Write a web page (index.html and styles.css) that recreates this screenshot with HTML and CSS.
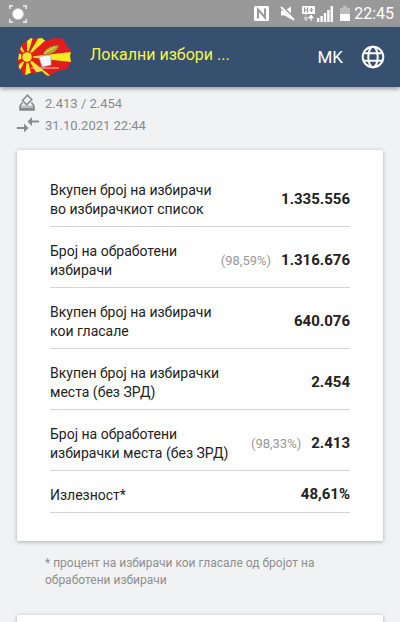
FILE: index.html
```html
<!DOCTYPE html>
<html lang="mk">
<head>
<meta charset="utf-8">
<meta name="viewport" content="width=device-width, initial-scale=1">
<title>Локални избори</title>
<link rel="stylesheet" href="styles.css">
</head>
<body>
<div class="status-bar">
  <svg class="capture" width="18" height="18" viewBox="0 0 18 18" fill="none" stroke="#fff" aria-hidden="true">
    <path d="M.8 4V.8H4M14 .8h3.200V4M17.200 14v3.200H14M4 17.200H.8V14" stroke-width="1.200"/>
    <circle cx="9" cy="9" r="5.500" fill="#fff" stroke="#c8c8c8"/>
  </svg>
  <div class="status-icons">
    <svg width="15" height="15" viewBox="0 0 15 15" aria-hidden="true">
      <rect width="15" height="15" rx="1.500" fill="#fff"/>
      <path d="M4 12.500V3.500l7 8V2.500" fill="none" stroke="#999" stroke-width="2"/>
    </svg>
    <svg class="mute" width="15" height="15" viewBox="0 0 15 15" aria-hidden="true">
      <path d="M1 4.500h4l6-4v13l-6-4H1z" fill="#fff"/>
      <path d="M1 0l14 14" stroke="#999" stroke-width="3.400"/>
      <path d="M1 1l13 13" stroke="#fff" stroke-width="1.800"/>
    </svg>
    <svg class="data" width="13" height="16" viewBox="0 0 13 16" aria-hidden="true">
      <path d="M0 0h13v8H0z" fill="#fff"/>
      <path d="M2.500 1.500v5M5.500 1.500v5M2.500 4h3M7.500 4h4M9.500 2v4" stroke="#999" stroke-width="1.200"/>
      <path d="M4 8v5M1.800 11.500L4 15l2.200-3.500z" fill="#ccc" stroke="#ccc"/>
      <path d="M9 15v-4M6.800 12L9 9l2.200 3z" fill="#fff" stroke="#fff"/>
    </svg>
    <svg width="16" height="16" viewBox="0 0 16 16" fill="#fff" aria-hidden="true">
      <path d="M0 12h2.400v4H0zM3.400 10h2.400v6H3.400zM6.800 7h2.400v9H6.800zM10.200 4h2.400v12h-2.400zM13.600 0H16v16h-2.400z"/>
    </svg>
    <svg class="battery" width="10" height="15" viewBox="0 0 10 15" aria-hidden="true">
      <path d="M3 0h4v2h3v6H0V2h3z" fill="#bdbdbd"/>
      <path d="M0 8h10v7H0z" fill="#fff"/>
    </svg>
    <span class="clock">22:45</span>
  </div>
</div>

<header class="app-bar">
  <svg class="logo" width="54" height="40" viewBox="0 0 54 40" aria-hidden="true">
    <defs>
      <clipPath id="land">
        <path d="M2 13L4 7l5-3 4-3 3 1 8-1 2 2 3 1 4-2 6-1 7 1 1 4 2 3 4 5-1 5 1 6-2 3-2 4-6 1-5 2-4 2-4 2-3-2-3-3-8 2-4 0-4 2-3-1-2-4-2-2-1-7 1-7z"/>
      </clipPath>
    </defs>
    <g clip-path="url(#land)">
      <path d="M0 0h54v40H0z" fill="#e31d1c"/>
      <path fill="#f8ea22" d="M9 20L54 15v10zM9 20L21 0h10zM9 20L21 40h13zM9 20L9 0h6zM9 20L7 40h7zM9 20L0 3v7zM9 20L0 16v7zM9 20L0 29v8z"/>
      <circle cx="9" cy="20" r="6" fill="#e31d1c"/>
      <circle cx="9" cy="20" r="4.800" fill="#f8e72e"/>
    </g>
    <path d="M21 20l8-2 4 1 0 9-9 2z" fill="#f6f6f6" stroke="#aaa" stroke-width=".6"/>
    <path d="M25 18c1-5 5-9 16-10-1 5-6 10-16 10z" fill="#bfa32e" stroke="#766018" stroke-width=".6"/>
    <path d="M26 17c3-3 7-5 11-7" fill="none" stroke="#eee16c"/>
    <path d="M13 31h28" stroke="#f6caca"/>
  </svg>
  <h1 class="title">Локални избори ...</h1>
  <button class="language" type="button">MK</button>
  <button class="globe" type="button" aria-label="Јазик">
    <svg width="24" height="24" viewBox="0 0 24 24" fill="none" stroke="#fff" stroke-width="2" aria-hidden="true">
      <circle cx="12" cy="12" r="10.300"/>
      <ellipse cx="12" cy="12" rx="4.700" ry="10.300"/>
      <path d="M2.500 8.300h19M2.500 15.700h19"/>
    </svg>
  </button>
</header>

<main class="content">
  <section class="updates">
    <p class="update">
      <svg width="22" height="18" viewBox="0 0 22 18" aria-hidden="true">
        <path d="M10.500 1.200l4.300 4.300-5 5.300-4.300-4.300z" fill="none" stroke="#8a8a8a" stroke-width="1.600"/>
        <path d="M5.500 8.500L3 12M14.500 8.500L17 12" fill="none" stroke="#8a8a8a" stroke-width="1.600"/>
        <path d="M2.200 11.800h15.600v5H2.200z" fill="#8a8a8a"/>
        <path d="M4 13h12" stroke="#f1f2f4" stroke-width="1"/>
      </svg>
      <span>2.413 / 2.454</span>
    </p>
    <p class="update">
      <svg width="22" height="18" viewBox="0 0 22 18" aria-hidden="true">
        <path d="M0 12h8M14 5.500h8" stroke="#8a8a8a" stroke-width="1.800"/>
        <path d="M7 7.500l4.500 4.500L7 16.500zM15 1l-4.500 4.500L15 10z" fill="#8a8a8a"/>
      </svg>
      <span>31.10.2021 22:44</span>
    </p>
  </section>

  <section class="card">
    <dl class="stats">
      <div class="stat"><dt>Вкупен број на избирачи<br>во избирачкиот список</dt><dd>1.335.556</dd></div>
      <div class="stat"><dt>Број на обработени<br>избирачи</dt><dd><span class="share">(98,59%)</span>1.316.676</dd></div>
      <div class="stat"><dt>Вкупен број на избирачи<br>кои гласале</dt><dd>640.076</dd></div>
      <div class="stat"><dt>Вкупен број на избирачки<br>места (без ЗРД)</dt><dd>2.454</dd></div>
      <div class="stat"><dt>Број на обработени<br>избирачки места (без ЗРД)</dt><dd><span class="share">(98,33%)</span>2.413</dd></div>
      <div class="stat"><dt>Излезност*</dt><dd>48,61%</dd></div>
    </dl>
  </section>

  <p class="note">* процент на избирачи кои гласале од бројот на обработени избирачи</p>

  <section class="card next"></section>
</main>
</body>
</html>
```
FILE: styles.css
```css
* {
  box-sizing: border-box;
}

body {
  margin: 0;
  background: #f1f2f4;
  color: #222;
  font-family: Roboto, "Liberation Sans", sans-serif;
  font-size: 14px;
  line-height: 19px;
}

svg {
  display: block;
  flex: none;
}

.status-bar {
  display: flex;
  align-items: center;
  justify-content: space-between;
  height: 27px;
  padding: 0 6px 0 9px;
  background: #999;
  color: #fff;
}

.status-icons {
  display: flex;
  align-items: center;
}

.mute {
  margin-left: 11px;
}

.data {
  margin: 0 2px 0 7px;
}

.battery {
  margin: 0 4px 0 7px;
}

.clock {
  font-size: 16px;
}

.app-bar {
  position: relative;
  display: flex;
  align-items: center;
  height: 60px;
  padding: 0 15px 0 18px;
  background: #38506f;
  box-shadow: 0 2px 4px rgba(0, 0, 0, 0.35);
}

.title {
  flex: 1;
  margin: 0 0 6px 18px;
  color: #f3f748;
  font-size: 16px;
  font-weight: 400;
}

.language,
.globe {
  padding: 0;
  border: 0;
  background: none;
  color: #fff;
  font: inherit;
  font-size: 17px;
}

.globe {
  margin-left: 18px;
}

.content {
  padding: 5px 17px 0;
}

.updates {
  color: #8a8a8a;
  font-size: 13px;
}

.update {
  display: flex;
  align-items: center;
  gap: 6px;
  height: 22px;
  margin: 0;
}

.card {
  margin-top: 14px;
  padding: 16px 33px 28px;
  border-radius: 2px;
  background: #fff;
  box-shadow: 0 1px 4px rgba(0, 0, 0, 0.3);
}

.stats {
  margin: 0;
}

.stat {
  display: flex;
  align-items: center;
  justify-content: space-between;
  padding: 15px 0 7px;
  border-bottom: 1px solid #d4d4d4;
}

.stat dd {
  margin: 0 0 2px;
  font-size: 15px;
  line-height: 17px;
  font-weight: 700;
  white-space: nowrap;
}

.share {
  margin-right: 10px;
  color: #999;
  font-size: 13px;
  font-weight: 400;
}

.note {
  margin: 14px 28px 0;
  color: #8f8f8f;
  font-size: 12px;
  line-height: 17px;
}

.next {
  height: 60px;
  margin-top: 26px;
  padding: 0;
}
```
